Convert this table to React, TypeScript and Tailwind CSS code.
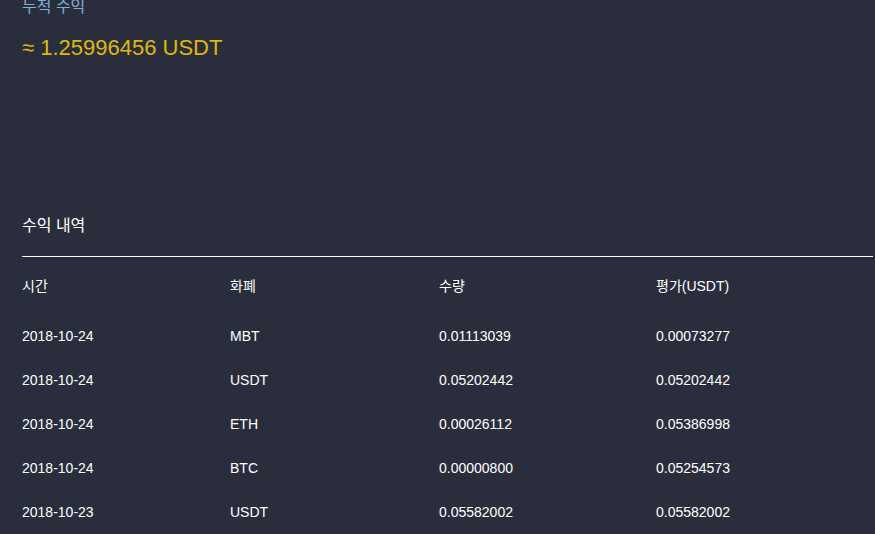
const rows = [
  { date: '2018-10-24', coin: 'MBT', amount: '0.01113039', value: '0.00073277' },
  { date: '2018-10-24', coin: 'USDT', amount: '0.05202442', value: '0.05202442' },
  { date: '2018-10-24', coin: 'ETH', amount: '0.00026112', value: '0.05386998' },
  { date: '2018-10-24', coin: 'BTC', amount: '0.00000800', value: '0.05254573' },
  { date: '2018-10-23', coin: 'USDT', amount: '0.05582002', value: '0.05582002' },
]

const cols = 'grid grid-cols-[208px_209px_217px_1fr]'

export default function App() {
  return (
    <div className="w-[875px] h-[534px] overflow-hidden bg-[#2a2e3c] pl-[22px] pr-[2px] font-['Liberation_Sans','Noto_Sans_CJK_KR',sans-serif]">
      {/* summary */}
      <div className="-mt-[3px] text-base leading-5 text-[#7eaed6]">누적 수익</div>
      <div className="mt-[18px] text-[22px] leading-[26px] text-[#dfb80c]">≈ 1.25996456 USDT</div>

      {/* history */}
      <div className="mt-[155px] text-base leading-5 text-white">수익 내역</div>
      <div className="mt-[20px] h-px bg-white" />
      <div className={`${cols} mt-[19px] text-sm leading-5 text-white`}>
        <div>시간</div>
        <div>화폐</div>
        <div>수량</div>
        <div>평가(USDT)</div>
      </div>
      <div className="mt-[20px] flex flex-col">
        {rows.map((r, i) => (
          <div key={i} className={`${cols} h-11 pt-[10px] text-sm leading-5 text-white`}>
            <div>{r.date}</div>
            <div>{r.coin}</div>
            <div>{r.amount}</div>
            <div>{r.value}</div>
          </div>
        ))}
      </div>
    </div>
  )
}
